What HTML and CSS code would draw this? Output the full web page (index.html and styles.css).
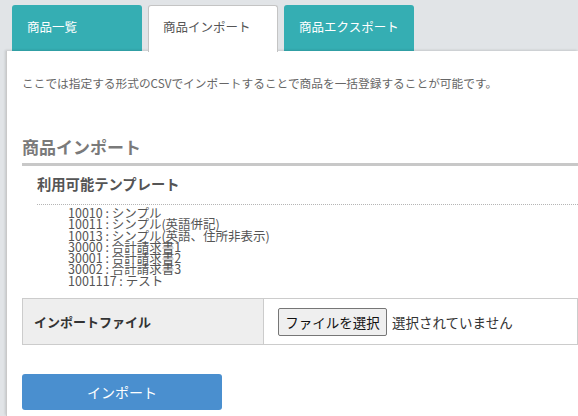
FILE: index.html
```html
<!DOCTYPE html>
<html lang="ja">
<head>
<meta charset="utf-8">
<link rel="stylesheet" href="styles.css">
</head>
<body>
<div class="tabs">
  <div class="tab">商品一覧</div>
  <div class="tab active">商品インポート</div>
  <div class="tab">商品エクスポート</div>
</div>
<div class="panel">
  <p class="desc">ここでは指定する形式のCSVでインポートすることで商品を一括登録することが可能です。</p>
  <h2 class="heading">商品インポート</h2>
  <h3 class="subheading">利用可能テンプレート</h3>
  <ul class="templates">
    <li>10010 : シンプル</li>
    <li>10011 : シンプル(英語併記)</li>
    <li>10013 : シンプル(英語、住所非表示)</li>
    <li>30000 : 合計請求書1</li>
    <li>30001 : 合計請求書2</li>
    <li>30002 : 合計請求書3</li>
    <li>1001117 : テスト</li>
  </ul>
  <div class="form-table">
    <div class="label-cell">インポートファイル</div>
    <div class="value-cell">
      <span class="file-btn">ファイルを選択</span>
      <span class="file-status">選択されていません</span>
    </div>
  </div>
  <div class="submit-row">
    <span class="submit-btn">インポート</span>
  </div>
</div>
</body>
</html>
```

FILE: styles.css
```css
html, body {
  margin: 0;
  padding: 0;
  height: 100%;
}
body {
  background: #e1e4e7;
  font-family: "Noto Sans CJK JP", "Noto Sans", sans-serif;
  color: #555;
  overflow: hidden;
  display: flex;
  flex-direction: column;
}
.tabs {
  display: flex;
  gap: 6px;
  padding: 5px 0 0 12px;
  height: 46px;
  box-sizing: content-box;
  flex: none;
}
.tab {
  width: 130px;
  height: 46px;
  box-sizing: border-box;
  background: #35aeb3;
  color: #fff;
  font-size: 12.5px;
  line-height: 44px;
  padding-left: 15px;
  border-radius: 3px 3px 0 0;
}
.tab.active {
  background: #fff;
  color: #555;
  border: 1px solid #c4c4c4;
  border-bottom: none;
  padding-left: 14px;
  line-height: 42px;
  position: relative;
  z-index: 2;
  height: 47px;
}
.panel {
  flex: 1;
  margin-left: 6px;
  background: #fff;
  border-left: 1px solid #c9c9c9;
  box-shadow: -1px -1px 2px rgba(0,0,0,0.12);
  padding: 1px 0 0 15px;
  position: relative;
  z-index: 1;
  overflow: hidden;
}
.desc {
  margin: 22px 0 0;
  font-size: 11.7px;
  line-height: 18px;
  color: #666;
}
.heading {
  margin: 43px 0 0;
  font-size: 17px;
  line-height: 24px;
  font-weight: bold;
  color: #7a7a7a;
  padding-bottom: 4px;
  border-bottom: 3px solid #c8c8c8;
}
.subheading {
  margin: 7px 0 0 15px;
  font-size: 14.3px;
  line-height: 22px;
  font-weight: bold;
  color: #555;
  padding-bottom: 9px;
  border-bottom: 1px dotted #b5b5b5;
}
.templates {
  list-style: none;
  margin: 2px 0 0;
  padding: 0 0 0 46px;
  font-size: 12.5px;
  line-height: 11.3px;
  color: #555;
}
.templates li {
  height: 11.3px;
}
.form-table {
  display: flex;
  margin-top: 12px;
  border: 1px solid #cccccc;
  height: 47px;
  box-sizing: border-box;
}
.label-cell {
  width: 241px;
  background: #eeeeee;
  border-right: 1px solid #cccccc;
  font-size: 13px;
  font-weight: bold;
  color: #333;
  display: flex;
  align-items: center;
  padding-left: 11px;
  box-sizing: border-box;
}
.value-cell {
  display: flex;
  align-items: center;
  padding-left: 14px;
  gap: 5px;
  font-size: 13.5px;
  color: #333;
}
.file-btn {
  display: inline-flex;
  align-items: center;
  justify-content: center;
  width: 109px;
  height: 28px;
  box-sizing: border-box;
  border: 1px solid #767676;
  border-radius: 2px;
  background: #efefef;
  color: #111;
}
.submit-row {
  margin-top: 29px;
}
.submit-btn {
  display: flex;
  align-items: center;
  justify-content: center;
  width: 200px;
  height: 36px;
  background: #4a8fcf;
  color: #fff;
  font-size: 14px;
  border-radius: 3px;
}
```
